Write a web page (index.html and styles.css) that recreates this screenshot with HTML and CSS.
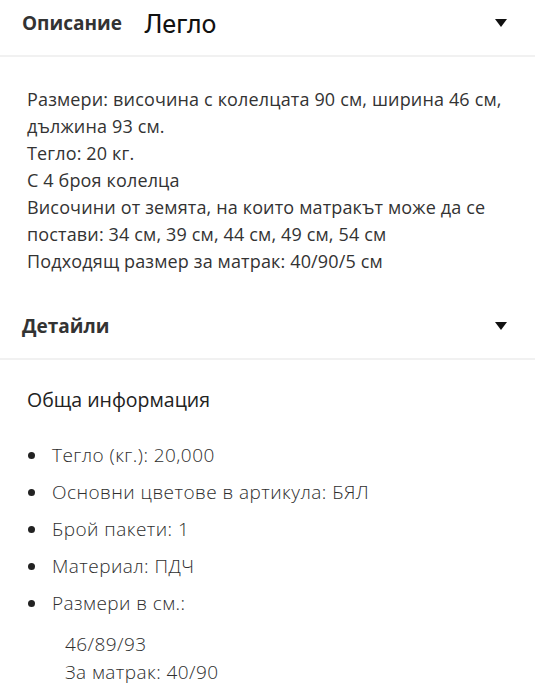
FILE: index.html
```html
<!DOCTYPE html>
<html lang="bg">
<head>
<meta charset="utf-8">
<link rel="stylesheet" href="styles.css">
</head>
<body>
<section class="acc">
  <div class="acc-head top">
    <div class="acc-title"><span class="label">Описание</span><span class="name">Легло</span></div>
    <span class="caret"></span>
  </div>
  <div class="acc-body desc">
    <p>Размери: височина с колелцата 90 см, ширина 46 см, дължина 93 см.<br>Тегло: 20 кг.<br>С 4 броя колелца<br>Височини от земята, на които матракът може да се постави: 34 см, 39 см, 44 см, 49 см, 54 см<br>Подходящ размер за матрак: 40/90/5 см</p>
  </div>
</section>
<section class="acc">
  <div class="acc-head details">
    <div class="acc-title"><span class="label">Детайли</span></div>
    <span class="caret"></span>
  </div>
  <div class="acc-body info">
    <h3 class="info-title">Обща информация</h3>
    <ul class="specs">
      <li>Тегло (кг.): 20,000</li>
      <li>Основни цветове в артикула: БЯЛ</li>
      <li>Брой пакети: 1</li>
      <li>Материал: ПДЧ</li>
      <li>Размери в см.:
        <div class="sub">46/89/93<br>За матрак: 40/90</div>
      </li>
    </ul>
  </div>
</section>
</body>
</html>
```

FILE: styles.css
```css
html, body {
  margin: 0;
  padding: 0;
  background: #fff;
}
body {
  width: 535px;
  overflow: hidden;
  font-family: "Open Sans", "Noto Sans", sans-serif;
  color: #333;
}
.acc-head {
  box-sizing: border-box;
  display: flex;
  align-items: center;
  justify-content: space-between;
  padding: 0 28px 0 22px;
  border-bottom: 2px solid #f1f1f1;
}
.top {
  height: 57px;
  padding-bottom: 10px;
}
.details {
  height: 85px;
  padding-top: 19px;
}
.acc-title {
  display: flex;
  align-items: center;
  gap: 22px;
}
.label {
  font-family: "Open Sans", sans-serif;
  font-weight: 700;
  font-size: 19px;
  color: #333;
}
.name {
  font-family: Roboto, sans-serif;
  font-size: 26px;
  color: #111;
  margin-top: 3px;
}
.caret {
  width: 0;
  height: 0;
  border-left: 6px solid transparent;
  border-right: 6px solid transparent;
  border-top: 8px solid #111;
}
.acc-body {
  padding: 0 22px 0 27px;
}
.desc p {
  margin: 0;
  padding: 29px 0 0;
  font-size: 18px;
  letter-spacing: 0.15px;
  line-height: 27px;
  color: #333;
}
.info-title {
  margin: 0;
  padding-top: 26px;
  font-size: 19.5px;
  font-weight: 500;
  line-height: 28px;
  color: #222;
}
.specs {
  list-style: none;
  margin: 0;
  padding: 23px 0 0 0;
}
.specs li {
  position: relative;
  padding-left: 25px;
  font-size: 19px;
  letter-spacing: 0.45px;
  line-height: 37px;
  font-weight: 300;
  color: #2e2e2e;
}
.specs li::before {
  content: "";
  position: absolute;
  left: 1px;
  top: 15px;
  width: 7px;
  height: 7px;
  border-radius: 50%;
  background: #222;
}
.sub {
  padding: 8px 0 0 13px;
  line-height: 28px;
}
```
